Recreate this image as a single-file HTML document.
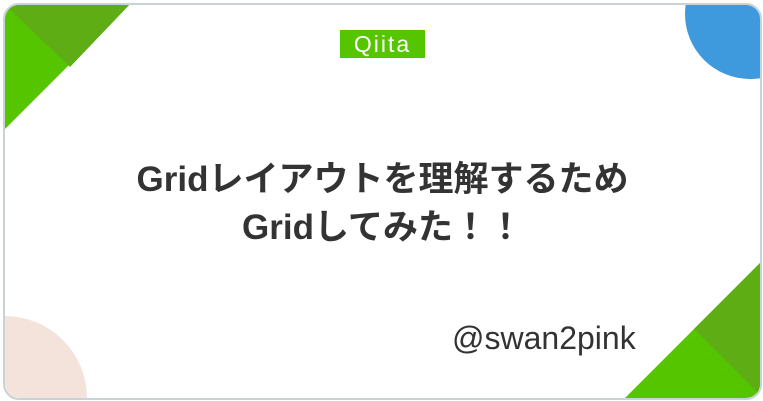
<!DOCTYPE html>
<html><head><meta charset="utf-8"><style>
html,body{margin:0;padding:0;width:763px;height:401px;background:#fff;overflow:hidden}
.card{position:absolute;left:3px;top:3px;width:755px;height:393px;border:2px solid #c9d1d9;border-radius:16px;overflow:hidden;background:#fff}
svg{position:absolute;left:-5px;top:-5px}
.logo{position:absolute;left:335px;top:25px;width:85px;height:28px;background:#55c500;color:#fff;font:500 23px "Liberation Sans",sans-serif;letter-spacing:2px;text-align:center;line-height:28px}
.t{position:absolute;left:0;width:755px;text-align:center;font:bold 35px/40px "Liberation Sans","Noto Sans CJK JP",sans-serif;color:#333;white-space:nowrap}
.a{position:absolute;left:447px;top:314px;font:500 32px/38px "Liberation Sans",sans-serif;color:#333}
</style></head><body>
<div class="card">
<svg width="762" height="400">
<polygon points="0,0 134,0 0,134" fill="#55c500"/>
<polygon points="0,0 134,0 70,67" fill="#5ead15"/>
<polygon points="625,398 763,260 763,398" fill="#55c500"/>
<polygon points="694,329 763,260 763,398" fill="#5ead15"/>
<circle cx="750" cy="14" r="65" fill="#3f99dd"/>
<circle cx="5" cy="398" r="82" fill="#f3e3da"/>
</svg>
<div class="logo">Qiita</div>
<div class="t" style="top:155px">Gridレイアウトを理解するため</div>
<div class="t" style="top:203px">Gridしてみた！！</div>
<div class="a">@swan2pink</div>
</div>
</body></html>
